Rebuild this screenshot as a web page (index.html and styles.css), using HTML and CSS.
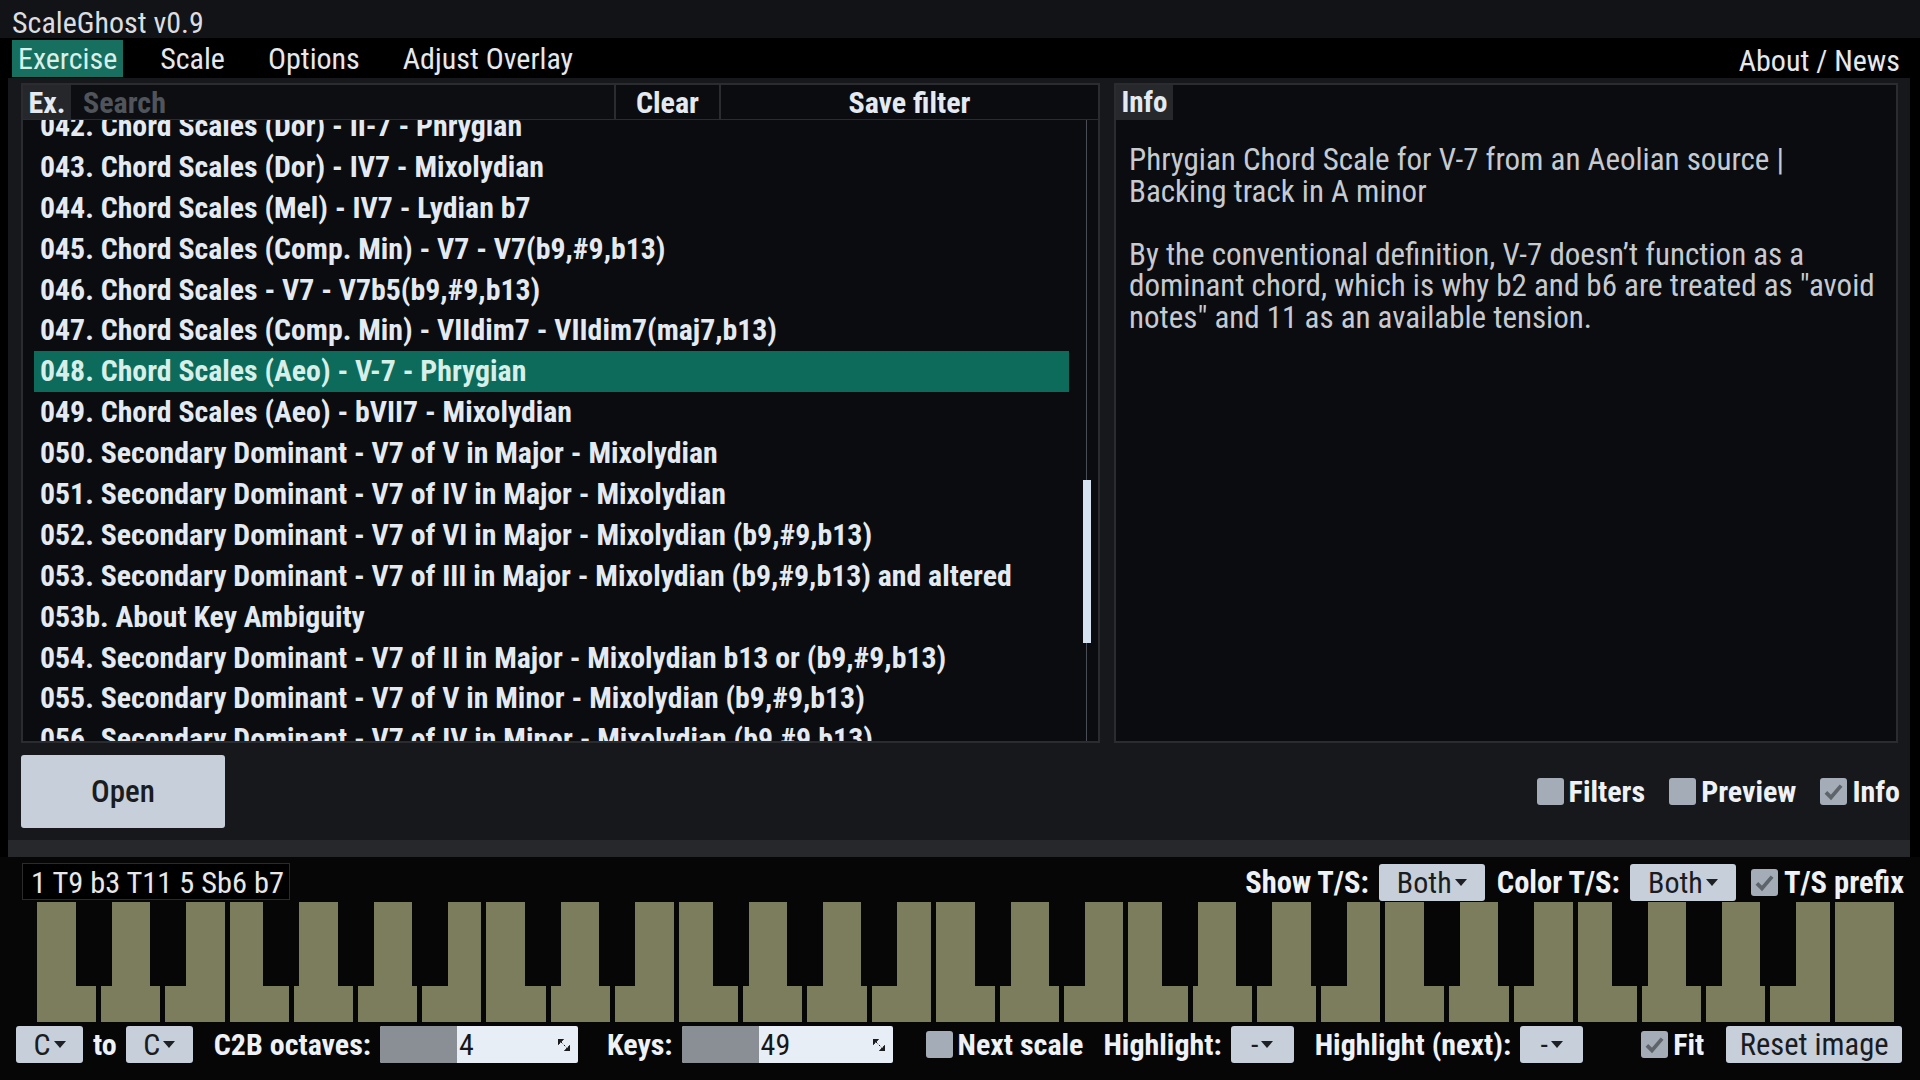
FILE: index.html
```html
<!DOCTYPE html>
<html lang="en">
<head>
	<meta charset="UTF-8">
	<title>ScaleGhost v0.9</title>
	<link rel="stylesheet" href="styles.css">
</head>
<body>
	<div class="titlebar">ScaleGhost v0.9</div>
	<nav class="menubar">
		<span class="menu-item active">Exercise</span>
		<span class="menu-item">Scale</span>
		<span class="menu-item">Options</span>
		<span class="menu-item">Adjust Overlay</span>
		<span class="menu-item about">About / News</span>
	</nav>

	<div class="workspace">
		<div class="panels">
			<section class="panel list-panel">
				<div class="list-head">
					<span class="head-label">Ex.</span>
					<span class="search">Search</span>
					<span class="head-btn clear">Clear</span>
					<span class="head-btn save">Save filter</span>
				</div>
				<div class="list-body">
					<ul class="ex-list">
						<li>042. Chord Scales (Dor) - II-7 - Phrygian</li>
						<li>043. Chord Scales (Dor) - IV7 - Mixolydian</li>
						<li>044. Chord Scales (Mel) - IV7 - Lydian b7</li>
						<li>045. Chord Scales (Comp. Min) - V7 - V7(b9,#9,b13)</li>
						<li>046. Chord Scales - V7 - V7b5(b9,#9,b13)</li>
						<li>047. Chord Scales (Comp. Min) - VIIdim7 - VIIdim7(maj7,b13)</li>
						<li class="sel">048. Chord Scales (Aeo) - V-7 - Phrygian</li>
						<li>049. Chord Scales (Aeo) - bVII7 - Mixolydian</li>
						<li>050. Secondary Dominant - V7 of V in Major - Mixolydian</li>
						<li>051. Secondary Dominant - V7 of IV in Major - Mixolydian</li>
						<li>052. Secondary Dominant - V7 of VI in Major - Mixolydian (b9,#9,b13)</li>
						<li>053. Secondary Dominant - V7 of III in Major - Mixolydian (b9,#9,b13) and altered</li>
						<li>053b. About Key Ambiguity</li>
						<li>054. Secondary Dominant - V7 of II in Major - Mixolydian b13 or (b9,#9,b13)</li>
						<li>055. Secondary Dominant - V7 of V in Minor - Mixolydian (b9,#9,b13)</li>
						<li>056. Secondary Dominant - V7 of IV in Minor - Mixolydian (b9,#9,b13)</li>
					</ul>
					<div class="scrollbar"><div class="thumb"></div></div>
				</div>
			</section>

			<section class="panel info-panel">
				<div class="info-tab">Info</div>
				<div class="info-text">
					<p>Phrygian Chord Scale for V-7 from an Aeolian source |<br>Backing track in A minor</p>
					<p>By the conventional definition, V-7 doesn’t function as a<br>dominant chord, which is why b2 and b6 are treated as "avoid<br>notes" and 11 as an available tension.</p>
				</div>
			</section>
		</div>

		<div class="actions">
			<span class="btn open">Open</span>
			<div class="toggles">
				<span class="check"></span><span class="toggle-label">Filters</span>
				<span class="check"></span><span class="toggle-label">Preview</span>
				<span class="check on"><svg viewBox="0 0 16 16"><path d="M3.5 8.5l3 3L12.5 4.5"/></svg></span><span class="toggle-label">Info</span>
			</div>
		</div>
	</div>

	<div class="band"></div>

	<div class="piano-area">
		<div class="piano-top">
			<span class="scale-label">1 T9 b3 T11 5 Sb6 b7</span>
			<div class="ts-controls">
				<span class="lbl">Show T/S:</span>
				<span class="btn drop ts">Both<i class="caret"></i></span>
				<span class="lbl">Color T/S:</span>
				<span class="btn drop ts">Both<i class="caret"></i></span>
				<span class="check on"><svg viewBox="0 0 16 16"><path d="M3.5 8.5l3 3L12.5 4.5"/></svg></span>
				<span class="lbl">T/S prefix</span>
			</div>
		</div>

		<div class="keyboard" id="keyboard"></div>

		<div class="piano-bottom">
			<span class="btn drop note">C<i class="caret"></i></span>
			<span class="lbl to">to</span>
			<span class="btn drop note">C<i class="caret"></i></span>
			<span class="lbl">C2B octaves:</span>
			<span class="spin"><span class="spin-fill"></span><span class="spin-val">4</span><svg class="spin-grip" viewBox="0 0 12 12"><path d="M0 0h6L0 6zM12 12H6l6-6zM3 3l6 6"/></svg></span>
			<span class="lbl keys">Keys:</span>
			<span class="spin wide"><span class="spin-fill"></span><span class="spin-val">49</span><svg class="spin-grip" viewBox="0 0 12 12"><path d="M0 0h6L0 6zM12 12H6l6-6zM3 3l6 6"/></svg></span>
			<span class="check next"></span>
			<span class="lbl next-lbl">Next scale</span>
			<span class="lbl">Highlight:</span>
			<span class="btn drop dash">-<i class="caret"></i></span>
			<span class="lbl">Highlight (next):</span>
			<span class="btn drop dash">-<i class="caret"></i></span>
			<span class="check on fit"><svg viewBox="0 0 16 16"><path d="M3.5 8.5l3 3L12.5 4.5"/></svg></span>
			<span class="lbl">Fit</span>
			<span class="btn reset">Reset image</span>
		</div>
	</div>

	<script src="keys.js"></script>
</body>
</html>
```

FILE: styles.css
```css
* {
	box-sizing: border-box;
}
body {
	margin: 0;
	width: 1920px;
	height: 1080px;
	overflow: hidden;
	background: #000;
	color: #e4eaf2;
	font-family: Roboto, "Noto Sans", sans-serif;
	font-stretch: 75%;
}
ul {
	list-style: none;
	margin: 0;
	padding: 0;
}
p {
	margin: 0;
}

/* title + menu */
.titlebar {
	height: 38px;
	line-height: 46px;
	padding-left: 12px;
	background: #121316;
	color: #dcdde0;
	font-size: 30px;
}
.menubar {
	height: 40px;
	display: flex;
	align-items: center;
	padding: 0 20px 0 12px;
	background: #000;
	font-size: 30px;
	color: #e6e8ec;
}
.menu-item {
	height: 37px;
	line-height: 37px;
	padding: 0 6px;
	margin-right: 31px;
}
.menu-item.active {
	background: #17705f;
	color: #d9efe9;
}
.menu-item.about {
	margin: 4px 0 0 auto;
	padding: 0;
}

/* main panels */
.workspace {
	height: 762px;
	margin: 0 10px 0 8px;
	background: #17181b;
	padding: 5px 12px 0 13px;
}
.panels {
	display: flex;
	gap: 14px;
	height: 660px;
}
.panel {
	border: 2px solid #2a2c30;
	background: #0b0c0f;
	display: flex;
	flex-direction: column;
}
.list-panel {
	width: 1079px;
}
.info-panel {
	flex: 1;
}
.list-head {
	display: flex;
	height: 35px;
	font-size: 30px;
	font-weight: 700;
	line-height: 35px;
	border-bottom: 1px solid #2a2c30;
	overflow: hidden;
}
.head-label {
	width: 48px;
	text-align: center;
	background: #25272b;
}
.search {
	width: 545px;
	padding-left: 12px;
	color: #50545b;
	background: #0d0e11;
	border-right: 2px solid #2a2c30;
}
.head-btn {
	text-align: center;
	color: #e4eaf2;
}
.clear {
	width: 105px;
	border-right: 2px solid #2a2c30;
}
.save {
	flex: 1;
}
.list-body {
	flex: 1;
	position: relative;
	overflow: hidden;
}
.ex-list {
	margin: -14px 0 0 11px;
	width: 1035px;
	font-size: 29.8px;
	font-weight: 700;
}
.ex-list li {
	height: 40.9px;
	line-height: 40.9px;
	padding-left: 6px;
	white-space: nowrap;
}
.ex-list .sel {
	background: #0d6b5b;
	color: #d7efe9;
}
.scrollbar {
	position: absolute;
	top: 0;
	bottom: 0;
	right: 7px;
	width: 8px;
}
.scrollbar::before {
	content: "";
	position: absolute;
	top: 0;
	bottom: 0;
	left: 3px;
	width: 1px;
	background: #4a4d53;
}
.thumb {
	position: absolute;
	top: 360px;
	height: 163px;
	width: 8px;
	background: #d6e2f0;
}
.info-tab {
	align-self: flex-start;
	width: 57px;
	height: 35px;
	line-height: 35px;
	text-align: center;
	background: #26282c;
	font-size: 29px;
	font-weight: 700;
}
.info-text {
	padding: 24px 13px 0;
	font-size: 31px;
	line-height: 31.6px;
	color: #c6cad1;
}
.info-text p {
	margin-bottom: 31.6px;
}

/* open + toggles */
.actions {
	display: flex;
	align-items: center;
	justify-content: space-between;
	height: 97px;
}
.btn {
	display: inline-flex;
	align-items: center;
	justify-content: center;
	background: #c6cfda;
	color: #1a1c1f;
	border-radius: 3px;
}
.open {
	width: 204px;
	height: 73px;
	font-size: 31px;
	font-weight: 500;
}
.toggles {
	display: flex;
	align-items: center;
	font-size: 30px;
	font-weight: 700;
	margin-right: -2px;
}
.check {
	display: inline-block;
	width: 27px;
	height: 27px;
	border-radius: 3px;
	background: #a4acb7;
	margin-right: 5px;
}
.check svg {
	display: block;
	width: 27px;
	height: 27px;
}
.check path {
	fill: none;
	stroke: #5f646b;
	stroke-width: 2.2;
}
.toggle-label {
	margin-right: 24px;
	color: #eef2f6;
}
.toggle-label:last-child {
	margin-right: 0;
}

.band {
	height: 17px;
	margin: 0 10px 0 8px;
	background: #26282c;
}

/* piano */
.piano-area {
	height: 223px;
	background: #060607;
	padding-top: 6px;
}
.piano-top {
	display: flex;
	align-items: center;
	justify-content: space-between;
	height: 39px;
	padding: 0 16px 0 22px;
}
.scale-label {
	width: 268px;
	height: 37px;
	line-height: 37px;
	padding-left: 8px;
	background: #000;
	border: 1px solid #2b2b2d;
	font-size: 30.4px;
	color: #e8e8e8;
	align-self: flex-start;
	white-space: nowrap;
}
.ts-controls {
	display: flex;
	align-items: center;
	font-size: 30.5px;
	font-weight: 700;
}
.lbl {
	color: #eef2f6;
	font-weight: 700;
	white-space: nowrap;
}
.drop {
	height: 37px;
	font-size: 30px;
	font-weight: 400;
	padding: 0 8px;
}
.ts {
	width: 106px;
	margin: 0 12px 0 10px;
}
.caret {
	display: inline-block;
	margin-left: 3px;
	border-left: 6px solid transparent;
	border-right: 6px solid transparent;
	border-top: 7px solid #1e2024;
}
.ts-controls .check {
	margin: 0 6px 0 3px;
}
.keyboard {
	position: relative;
	display: flex;
	gap: 5px;
	width: 1857px;
	height: 120px;
	margin-left: 37px;
}
.white {
	flex: 1;
	background: #7b7d5d;
}
.black {
	position: absolute;
	top: 0;
	width: 36px;
	height: 84px;
	background: #060607;
}
.piano-bottom {
	display: flex;
	align-items: center;
	height: 37px;
	margin-top: 4px;
	padding-left: 16px;
	font-size: 30px;
}
.note {
	width: 67px;
}
.to {
	margin: 0 8px 0 10px;
}
.piano-bottom .lbl {
	margin-right: 9px;
}
.piano-bottom .to + .note {
	margin-right: 21px;
}
.spin {
	position: relative;
	display: flex;
	width: 198px;
	height: 37px;
	background: #e8eef5;
	color: #15171a;
	border-radius: 2px;
	overflow: hidden;
}
.spin.wide {
	width: 211px;
}
.spin-fill {
	width: 77px;
	background: #8a8f95;
}
.spin-val {
	line-height: 37px;
	padding-left: 2px;
}
.spin-grip {
	position: absolute;
	right: 8px;
	top: 13px;
	width: 12px;
	height: 12px;
}
.spin-grip path {
	fill: #1b1d20;
	stroke: #1b1d20;
	stroke-width: 1;
	stroke-dasharray: 2 2;
}
.keys {
	margin-left: 29px;
}
.next {
	margin-left: 33px;
}
.piano-bottom .next-lbl {
	margin-right: 20px;
}
.dash {
	width: 63px;
	margin-right: 21px;
}
.fit {
	margin-left: 37px;
}
.reset {
	height: 37px;
	width: 176px;
	margin-left: 13px;
	font-size: 30.5px;
}
```

FILE: keys.js
```js
// 49 keys: C to C, four octaves plus one
var kb = document.getElementById('keyboard');
var whites = 29;
var gap = 5;
var pitch = (1857 + gap) / whites;
// black keys: white boundary after index, and a small shift like a real piano
var blacks = [[1, -5], [2, 5], [4, -10], [5, 0], [6, 10]];

for (var i = 0; i < whites; i++) {
	var w = document.createElement('div');
	w.className = 'white';
	kb.appendChild(w);
}
for (var o = 0; o < 4; o++) {
	for (var j = 0; j < blacks.length; j++) {
		var b = document.createElement('div');
		var edge = (o * 7 + blacks[j][0]) * pitch - gap / 2;
		b.className = 'black';
		b.style.left = (edge + blacks[j][1] - 18) + 'px';
		kb.appendChild(b);
	}
}
```
